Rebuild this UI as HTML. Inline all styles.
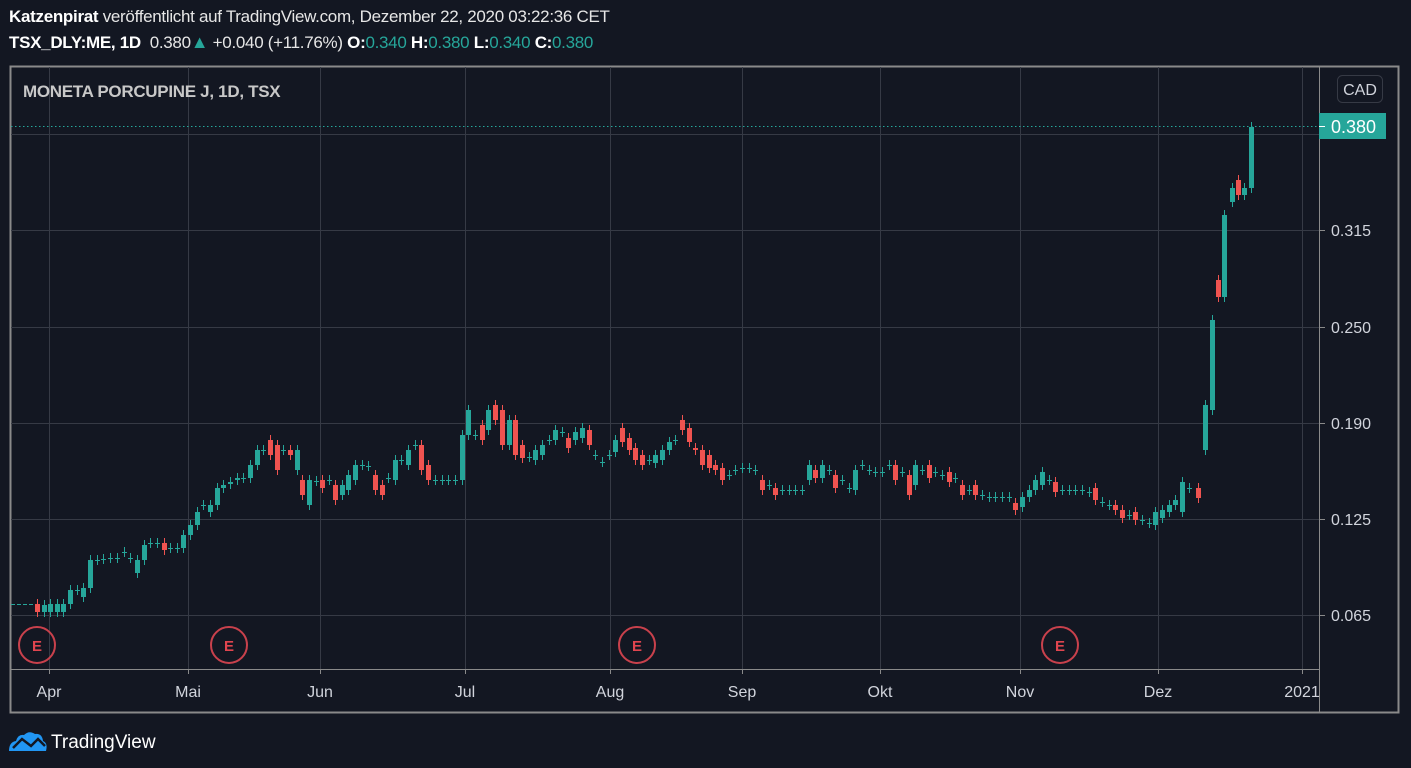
<!DOCTYPE html>
<html><head><meta charset="utf-8"><style>
html,body{margin:0;padding:0;background:#131722;width:1411px;height:768px;overflow:hidden;font-family:"Liberation Sans",sans-serif}
.t{position:absolute;color:#e6e6e6;font-size:17px;white-space:nowrap;letter-spacing:-0.3px}
.t b{color:#fff}
.g{color:#26a69a}
</style></head><body>
<div class="t" style="left:9px;top:7px"><b>Katzenpirat</b> veröffentlicht auf TradingView.com, Dezember 22, 2020 03:22:36 CET</div>
<div class="t" style="left:9px;top:32px"><b>TSX_DLY:ME, 1D</b>&nbsp; 0.380<span class="g" style="font-size:18px">▲</span> +0.040 (+11.76%) <b>O:</b><span class="g">0.340</span> <b>H:</b><span class="g">0.380</span> <b>L:</b><span class="g">0.340</span> <b>C:</b><span class="g">0.380</span></div>
<svg id="s" width="1411" height="768" style="position:absolute;left:0;top:0" xmlns="http://www.w3.org/2000/svg">
<rect x="10.5" y="66.5" width="1388" height="646" fill="none" stroke="#8a8a8a" stroke-width="2"/>
<g stroke="#363a45" stroke-width="1">
<line x1="11" x2="1319" y1="134.5" y2="134.5"/><line x1="11" x2="1319" y1="230.5" y2="230.5"/><line x1="11" x2="1319" y1="327.5" y2="327.5"/><line x1="11" x2="1319" y1="423.5" y2="423.5"/><line x1="11" x2="1319" y1="519.5" y2="519.5"/><line x1="11" x2="1319" y1="615.5" y2="615.5"/>
<line x1="49.5" x2="49.5" y1="67" y2="669"/><line x1="188.5" x2="188.5" y1="67" y2="669"/><line x1="320.5" x2="320.5" y1="67" y2="669"/><line x1="465.5" x2="465.5" y1="67" y2="669"/><line x1="610.5" x2="610.5" y1="67" y2="669"/><line x1="742.5" x2="742.5" y1="67" y2="669"/><line x1="880.5" x2="880.5" y1="67" y2="669"/><line x1="1020.5" x2="1020.5" y1="67" y2="669"/><line x1="1158.5" x2="1158.5" y1="67" y2="669"/><line x1="1302.5" x2="1302.5" y1="67" y2="669"/>
</g>
<line x1="11" x2="1319" y1="669.5" y2="669.5" stroke="#8a8a8a"/>
<line x1="1319.5" x2="1319.5" y1="67" y2="712" stroke="#8a8a8a"/>
<g stroke="#8a8a8a"><line x1="49.5" x2="49.5" y1="669" y2="674"/><line x1="188.5" x2="188.5" y1="669" y2="674"/><line x1="320.5" x2="320.5" y1="669" y2="674"/><line x1="465.5" x2="465.5" y1="669" y2="674"/><line x1="610.5" x2="610.5" y1="669" y2="674"/><line x1="742.5" x2="742.5" y1="669" y2="674"/><line x1="880.5" x2="880.5" y1="669" y2="674"/><line x1="1020.5" x2="1020.5" y1="669" y2="674"/><line x1="1158.5" x2="1158.5" y1="669" y2="674"/><line x1="1302.5" x2="1302.5" y1="669" y2="674"/>
<line x1="1319" x2="1325" y1="230.5" y2="230.5"/><line x1="1319" x2="1325" y1="327.5" y2="327.5"/><line x1="1319" x2="1325" y1="423.5" y2="423.5"/><line x1="1319" x2="1325" y1="519.5" y2="519.5"/><line x1="1319" x2="1325" y1="615.5" y2="615.5"/></g>
<line x1="11" x2="1319" y1="126.5" y2="126.5" stroke="#26a69a" stroke-dasharray="1.5,2.5"/>
<line x1="11" x2="35" y1="604.5" y2="604.5" stroke="#26a69a" stroke-dasharray="4,2"/>
<g id="c"></g>
<g font-family="Liberation Sans,sans-serif" font-size="16" fill="#d1d4dc">
<text x="1331" y="236">0.315</text><text x="1331" y="333">0.250</text><text x="1331" y="429">0.190</text><text x="1331" y="525">0.125</text><text x="1331" y="621">0.065</text>
<g text-anchor="middle"><text x="49" y="697">Apr</text><text x="188" y="697">Mai</text><text x="320" y="697">Jun</text><text x="465" y="697">Jul</text><text x="610" y="697">Aug</text><text x="742" y="697">Sep</text><text x="880" y="697">Okt</text><text x="1020" y="697">Nov</text><text x="1158" y="697">Dez</text><text x="1302" y="697">2021</text></g>
</g>
<text x="23" y="97" font-size="17" font-weight="bold" fill="#c8c8c8" font-family="Liberation Sans,sans-serif" letter-spacing="-0.3">MONETA PORCUPINE J, 1D, TSX</text>
<rect x="1337.5" y="75.5" width="45" height="27" rx="5" fill="#131722" stroke="#363a45"/>
<text x="1360" y="95" text-anchor="middle" font-size="16" fill="#d1d4dc" font-family="Liberation Sans,sans-serif">CAD</text>
<rect x="1319" y="113" width="67" height="26" fill="#26a69a"/>
<line x1="1319" x2="1325" y1="126.5" y2="126.5" stroke="#fff"/>
<text x="1331" y="133" font-size="18" fill="#fff" font-family="Liberation Sans,sans-serif">0.380</text>
<g fill="none" stroke="#c9414c" stroke-width="2"><circle cx="37" cy="645" r="18"/><circle cx="229" cy="645" r="18"/><circle cx="637" cy="645" r="18"/><circle cx="1060" cy="645" r="18"/></g>
<g fill="#e0454f" font-size="15" font-weight="bold" text-anchor="middle" font-family="Liberation Sans,sans-serif"><text x="37" y="651">E</text><text x="229" y="651">E</text><text x="637" y="651">E</text><text x="1060" y="651">E</text></g>
<path d="M9 751 Q9 742 16 741 Q18 734 24 735 Q29 730 35 734 Q42 733 43 741 Q48 743 46 751 Z" fill="#2196f3"/>
<path d="M13 748 L22 739 L31 746 L38 739 L45 746" stroke="#131722" stroke-width="2.5" fill="none"/>
<text x="51" y="748" font-size="19" fill="#fff" font-family="Liberation Sans,sans-serif">TradingView</text>
</svg>
<script>
var d="35,604,612;42,612,605;48,612,604;55,612,604;61,612,604;68,604,590;75,590,590;81,597,588;88,588,560;95,560,560;101,559,559;108,558,558;115,558,558;122,552,552;128,558,558;135,573,560;142,560,545;148,543,543;155,543,543;162,543,550;168,548,548;175,548,548;181,548,535;188,535,525;195,525,512;201,505,505;208,512,505;215,505,488;221,488,485;228,484,482;235,480,478;241,478,478;248,478,465;255,465,450;261,450,450;268,440,455;275,445,470;281,450,450;288,450,455;295,470,450;300,480,495;307,505,480;314,481,481;320,480,488;327,480,480;333,485,500;340,495,485;346,490,475;353,480,465;360,465,465;366,466,466;373,475,490;380,485,495;386,478,478;393,480,460;399,460,460;406,465,450;413,445,445;419,445,470;426,465,480;433,480,480;440,480,480;446,480,480;453,480,480;460,480,435;466,435,410;473,435,435;480,425,440;486,430,410;493,405,420;500,410,445;507,445,420;513,420,455;520,445,458;527,457,457;533,460,450;540,455,445;547,440,440;553,440,430;560,432,432;566,438,448;573,440,432;580,438,428;587,430,445;593,455,455;600,462,462;607,455,455;613,452,440;620,428,442;627,438,450;633,448,460;640,455,465;647,460,460;653,463,455;660,460,450;667,450,442;673,440,440;680,420,430;687,428,442;693,448,450;700,450,465;707,455,468;713,465,470;720,468,480;727,475,475;733,470,470;740,468,468;747,468,468;753,470,470;760,480,490;767,485,485;773,488,495;780,490,490;787,490,490;793,490,490;800,490,490;807,480,465;813,470,478;820,478,465;827,470,470;833,475,488;840,480,480;847,488,488;853,490,470;860,465,465;867,470,470;873,472,472;880,472,472;887,465,465;893,465,480;900,472,472;907,475,495;913,485,465;920,470,470;927,465,478;933,472,472;940,475,475;947,472,482;953,478,478;960,485,495;967,490,490;973,485,495;980,495,495;987,497,497;993,497,497;1000,497,497;1007,497,497;1013,503,510;1020,507,497;1027,497,490;1033,490,480;1040,485,472;1047,480,480;1053,482,492;1060,490,490;1067,490,490;1073,490,490;1080,490,490;1087,492,492;1093,488,500;1100,502,502;1107,505,505;1113,505,510;1120,510,518;1127,515,515;1133,512,520;1140,520,520;1147,523,523;1153,525,512;1160,518,510;1167,512,505;1173,505,500;1180,512,482;1187,488,488;1196,488,498;1203,450,405;1210,410,320;1216,280,297;1222,297,215;1230,202,188;1236,180,195;1242,195,188;1249,188,127";
var h="";d.split(";").forEach(function(r){var a=r.split(",").map(Number),x=a[0],o=a[1],c=a[2];var col=c>o?"#ef5350":"#26a69a";var t=Math.min(o,c),b=Math.max(o,c);
h+='<line x1="'+(x+2.5)+'" x2="'+(x+2.5)+'" y1="'+(t-5)+'" y2="'+(b+5)+'" stroke="'+col+'"/>';
h+='<rect x="'+x+'" y="'+t+'" width="5" height="'+Math.max(1,b-t)+'" fill="'+col+'"/>';});
document.getElementById("c").innerHTML=h;
</script>
</body></html>
